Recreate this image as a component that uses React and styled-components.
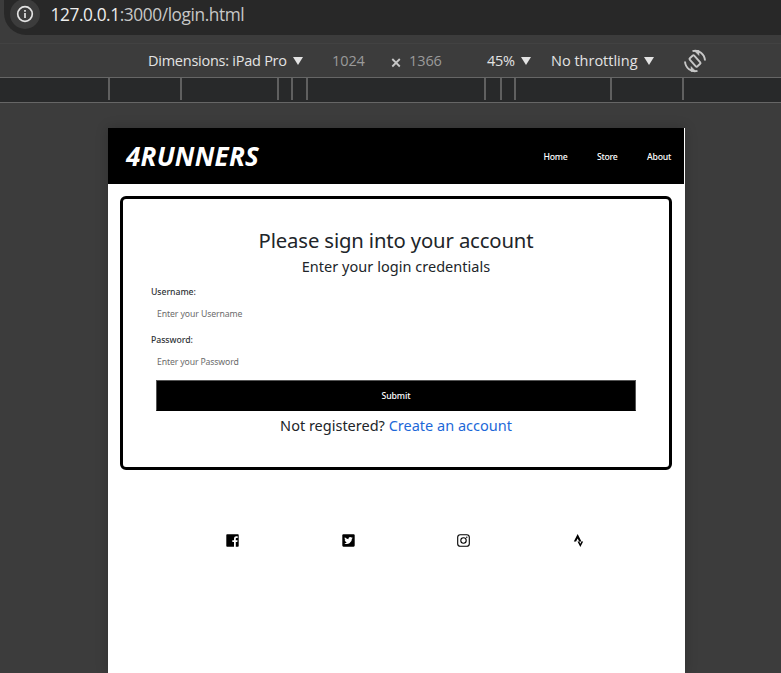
import React from "react";
import styled, { createGlobalStyle } from "styled-components";
import { FaStrava } from "react-icons/fa";

const GlobalStyle = createGlobalStyle`
  * { box-sizing: border-box; }
  html, body { margin: 0; background: #3c3c3c; overflow: hidden; }
  h1, h2, p { margin: 0; font-weight: 400; }
`;

const Browser = styled.div`
  width: 781px;
  height: 673px;
  overflow: hidden;
  display: flex;
  flex-direction: column;
  background: #3c3c3c;
  font-family: "Open Sans", "Noto Sans", sans-serif;
`;

const AddressBar = styled.header`
  flex: none;
  height: 35px;
  margin-left: 4px;
  padding-left: 6px;
  display: flex;
  align-items: flex-start;
  background: #282828;
  border-radius: 0 0 0 22px;
`;

const InfoBadge = styled.span`
  width: 30px;
  height: 30px;
  margin-top: -1px;
  border-radius: 50%;
  background: #3c3c3c;
  display: grid;
  place-items: center;
`;

const Url = styled.span`
  margin-left: 10.5px;
  font-size: 17.3px;
  line-height: 30px;
  letter-spacing: -0.41px;
  white-space: nowrap;
  color: #c7c7c7;
  b { font-weight: 400; color: #eee; }
`;

const DeviceBar = styled.div`
  flex: none;
  height: 34px;
  margin-top: 8px;
  padding-left: 148px;
  display: flex;
  align-items: center;
  border-top: 1px solid #424242;
  color: #e3e3e3;
  font-size: 14.5px;
  white-space: nowrap;
`;

const BarItem = styled.span`
  flex: none;
  width: ${(p) => p.$width}px;
  display: flex;
  align-items: center;
  gap: 6px;
  letter-spacing: ${(p) => p.$spacing || 0}px;
  color: ${(p) => (p.$muted ? "#9a9a9a" : "#e3e3e3")};
`;

const Arrow = styled.i`
  border: 5px solid transparent;
  border-top: 8px solid #e3e3e3;
  border-bottom: 0;
`;

const Ruler = styled.div`
  flex: none;
  height: 26px;
  display: flex;
  background: #28292a;
  border-top: 1px solid #666;
  border-bottom: 1px solid #666;
`;

const Tick = styled.i`
  flex: none;
  width: 2px;
  height: 22px;
  margin-left: ${(p) => p.$gap}px;
  background: #606060;
`;

const Device = styled.main`
  flex: 1;
  width: 577px;
  margin: 25px 0 0 108px;
  background: #fff;
  box-shadow: 0 0 12px rgba(0, 0, 0, 0.2);
  font-family: "Noto Sans", sans-serif;
  color: #212529;
`;

const Navbar = styled.nav`
  width: 576px;
  height: 56px;
  padding: 0 13px 0 18px;
  display: flex;
  align-items: center;
  justify-content: space-between;
  background: #000;
  color: #fff;
`;

const Brand = styled.h1`
  font: italic 700 26px/56px "Open Sans", sans-serif;
  letter-spacing: 0.25px;
`;

const NavLinks = styled.div`
  display: flex;
  gap: 29.5px;
  font-size: 8.7px;
  font-weight: 500;
  letter-spacing: -0.25px;
  margin-top: 2px;
`;

const Card = styled.section`
  width: 552px;
  height: 274px;
  margin: 12px 0 0 12px;
  padding: 27px 28px 0;
  border: 3px solid #000;
  border-radius: 6px;
  display: flex;
  flex-direction: column;
  text-align: center;
`;

const Title = styled.h2`
  font-size: 20.3px;
  line-height: 28px;
  letter-spacing: -0.14px;
`;

const Lead = styled.p`
  font-size: 14.5px;
  line-height: 24px;
  letter-spacing: ${(p) => p.$spacing || 0}px;
  a { color: #1d68d8; text-decoration: none; }
`;

const Label = styled.label`
  text-align: left;
  font-size: 8.7px;
  font-weight: 500;
  line-height: 12px;
  height: 12px;
  margin-top: ${(p) => p.$top}px;
  letter-spacing: -0.05px;
  color: #303438;
`;

const Field = styled.input`
  height: 20px;
  margin: 6px 6px 0;
  padding: 0;
  border: 0;
  outline: 0;
  font: 8.7px "Noto Sans", sans-serif;
  letter-spacing: ${(p) => p.$spacing}px;
  &::placeholder { color: #6b6b6b; opacity: 1; }
`;

const Submit = styled.button`
  height: 31px;
  margin: 8px 5px 2px;
  padding: 0;
  border: 1px solid #555;
  border-bottom-color: #000;
  background: #000;
  color: #fff;
  font: 500 8.7px "Noto Sans", sans-serif;
  letter-spacing: -0.1px;
  flex: none;
`;

const Socials = styled.footer`
  margin: 63px 0 0 67px;
  height: 14px;
  display: grid;
  grid-template-columns: repeat(4, 115.4px);
  align-items: center;
  justify-items: center;
  color: #000;
`;

const ticks = [108, 70, 95, 12, 13, 176, 14, 12, 94, 70];

function RotateIcon() {
  return (
    <svg width="24" height="24" viewBox="0 0 24 24" fill="none" stroke="#c7c7c7" strokeWidth="1.9">
      <rect x="9" y="6.5" width="6" height="11" rx="1" transform="rotate(-42 12 12)" />
      <path d="M9.5 2.2C16 .5 21.5 5 22 11.5M14.5 21.8C8 23.5 2.5 19 2 12.5" />
      <path d="M11 1.5h5v5zM13 22.5H8v-5z" fill="#c7c7c7" strokeWidth="0.5" />
    </svg>
  );
}

function FacebookIcon() {
  return (
    <svg width="13" height="13" viewBox="0 0 13 13">
      <rect x="0.3" y="0.3" width="12.4" height="12.4" rx="0.8" fill="#000" />
      <path d="M8 13V8H6.3V6.2H8V4.8C8 3.1 9 2.3 10.4 2.3h1.3V4h-1c-.7 0-.9.4-.9 1v1.2h1.8L11.3 8H9.8v5z" fill="#fff" />
    </svg>
  );
}

function TwitterIcon() {
  return (
    <svg width="13" height="13" viewBox="0 0 13 13">
      <rect x="0.3" y="0.3" width="12.4" height="12.4" rx="1.1" fill="#000" />
      <g transform="translate(2 2) scale(.375)">
        <path fill="#fff" d="M23.6 4.9c-.8.4-1.7.6-2.7.8a4.7 4.7 0 0 0 2-2.6c-.9.5-1.9.9-3 1.1a4.7 4.7 0 0 0-8 4.3A13.3 13.3 0 0 1 2.2 3.6a4.7 4.7 0 0 0 1.5 6.2c-.8 0-1.5-.2-2.1-.6 0 2.3 1.6 4.2 3.7 4.7-.7.2-1.4.2-2.1.1.6 1.8 2.3 3.2 4.4 3.2A9.4 9.4 0 0 1 .6 19.2a13.3 13.3 0 0 0 20.5-11.8c.9-.7 1.8-1.5 2.5-2.5z" />
      </g>
    </svg>
  );
}

function InstagramIcon() {
  return (
    <svg width="13" height="13" viewBox="0 0 13 13" fill="none" stroke="#000" strokeWidth="1.1">
      <rect x="0.7" y="0.7" width="11.6" height="11.6" rx="2.6" />
      <circle cx="6.5" cy="6.5" r="2.7" />
      <circle cx="9.8" cy="3.2" r="0.7" fill="#000" stroke="none" />
    </svg>
  );
}

export default function App() {
  return (
    <Browser>
      <GlobalStyle />
      <AddressBar>
        <InfoBadge>
          <svg width="18" height="18" viewBox="0 0 18 18" fill="none" stroke="#e3e3e3" strokeWidth="1.7">
            <circle cx="9" cy="9" r="7.3" />
            <path d="M9 8v5M9 5v1.8" />
          </svg>
        </InfoBadge>
        <Url><b>127.0.0.1</b>:3000/login.html</Url>
      </AddressBar>
      <DeviceBar>
        <BarItem $width={184} $spacing={-0.25}><span>Dimensions: iPad Pro</span><Arrow /></BarItem>
        <BarItem $width={59} $muted $spacing={-0.1}>1024</BarItem>
        <BarItem $width={18}>
          <svg width="10" height="14" viewBox="0 0 10 14" stroke="#c7c7c7" strokeWidth="1.8"><path d="M1.3 5l7.5 7.5M8.8 5l-7.5 7.5" /></svg>
        </BarItem>
        <BarItem $width={78} $muted $spacing={-0.1}>1366</BarItem>
        <BarItem $width={64} $spacing={-0.3}><span>45%</span><Arrow /></BarItem>
        <BarItem $width={132}><span>No throttling</span><Arrow /></BarItem>
        <RotateIcon />
      </DeviceBar>
      <Ruler>{ticks.map((gap, i) => <Tick key={i} $gap={gap} />)}</Ruler>
      <Device>
        <Navbar>
          <Brand>4RUNNERS</Brand>
          <NavLinks><span>Home</span><span>Store</span><span>About</span></NavLinks>
        </Navbar>
        <Card>
          <Title>Please sign into your account</Title>
          <Lead $spacing={0.03}>Enter your login credentials</Lead>
          <Label $top={8}>Username:</Label>
          <Field placeholder="Enter your Username" $spacing={-0.1} />
          <Label $top={10}>Password:</Label>
          <Field placeholder="Enter your Password" $spacing={-0.14} />
          <Submit>Submit</Submit>
          <Lead>Not registered? <a>Create an account</a></Lead>
        </Card>
        <Socials>
          <FacebookIcon />
          <TwitterIcon />
          <InstagramIcon />
          <FaStrava size={13} />
        </Socials>
      </Device>
    </Browser>
  );
}
